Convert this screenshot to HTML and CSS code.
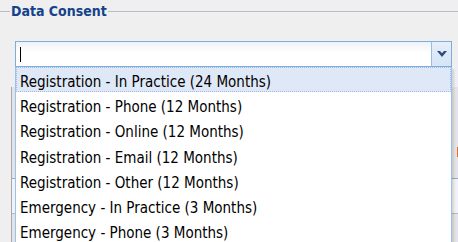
FILE: index.html
```html
<!DOCTYPE html>
<html lang="en">
  <head>
    <meta charset="UTF-8" />
    <meta name="viewport" content="width=device-width, initial-scale=1.0" />
    <title>Data Consent</title>
    <link rel="stylesheet" href="styles.css">
  </head>
  <body>
    <fieldset class="consent">
      <legend>Data Consent</legend>
      <div class="combo">
        <div class="combo-input"><span class="caret"></span></div>
        <div class="combo-trigger">
          <svg width="10" height="6" viewBox="0 0 10 6">
            <polygon points="0,0 3,0 5,2.2 7,0 10,0 5,6" fill="#2d4c7c" />
          </svg>
        </div>
        <ul class="combo-list">
          <li class="selected">Registration - In Practice (24 Months)</li>
          <li>Registration - Phone (12 Months)</li>
          <li>Registration - Online (12 Months)</li>
          <li>Registration - Email (12 Months)</li>
          <li>Registration - Other (12 Months)</li>
          <li>Emergency - In Practice (3 Months)</li>
          <li>Emergency - Phone (3 Months)</li>
        </ul>
      </div>
      <div class="behind">
        <div class="behind-row"></div>
        <div class="behind-row marked"><span class="flag"></span></div>
        <div class="behind-row light"></div>
        <div class="behind-row"></div>
      </div>
    </fieldset>
  </body>
</html>
```

FILE: styles.css
```css
body {
  margin: 0;
  background: #efefef;
  font-family: "DejaVu Sans Condensed", "Liberation Sans", sans-serif;
  overflow: hidden;
}
.consent {
  margin: 2px 0 0 0;
  padding: 20px 6px 0 10px;
  border: none;
  border-top: 1px solid #b9bcc8;
  min-width: 0;
}
.consent legend {
  padding: 0 1px;
  font-size: 14px;
  line-height: 19px;
  font-weight: bold;
  color: #15428b;
}
.combo {
  position: relative;
  display: flex;
  height: 26px;
  margin-left: 5px;
}
.combo-input {
  flex: 1;
  display: flex;
  align-items: center;
  padding-left: 4px;
  border: 1px solid #7eadd9;
  border-right: none;
  background: linear-gradient(to bottom, #eef2f8, #ffffff 45%);
}
.caret {
  width: 0;
  height: 15px;
  border-left: 1px solid #000;
}
.combo-trigger {
  width: 19px;
  display: flex;
  align-items: center;
  justify-content: center;
  border: 1px solid #7eadd9;
  border-left-color: #99bbe8;
  background: linear-gradient(to bottom, #e6effa, #d5e4f6);
}
.combo-list {
  position: absolute;
  top: 100%;
  left: 0;
  right: 0;
  z-index: 2;
  margin: 0;
  padding: 0;
  list-style: none;
  background: #fff;
  border: 1px solid #98c0f4;
  border-top: none;
  box-shadow: 2px 2px 2px rgba(0, 0, 0, 0.12);
}
.combo-list li {
  padding: 6px 3px 0;
  font-size: 15px;
  line-height: 17.2px;
  color: #000;
  border: 1px solid transparent;
  white-space: nowrap;
}
.combo-list li.selected {
  background: #dfe8f6;
  border: 1px dotted #a3bae9;
}
.behind {
  margin: 20px -20px 0 1px;
  height: 155px;
  overflow: hidden;
  border-left: 1px solid #a9a9a9;
  background: #e4e4e4;
}
.behind-row {
  position: relative;
  height: 46px;
}
.behind-row.marked {
  height: 45px;
  border-bottom: 1px solid #99aac4;
}
.behind-row.light {
  height: 34px;
  background: #f2f2f2;
  border-bottom: 1px solid #b8b8b8;
}
.flag {
  position: absolute;
  left: 445px;
  top: 14px;
  width: 6px;
  height: 10px;
  background: #f26a1b;
}
```
